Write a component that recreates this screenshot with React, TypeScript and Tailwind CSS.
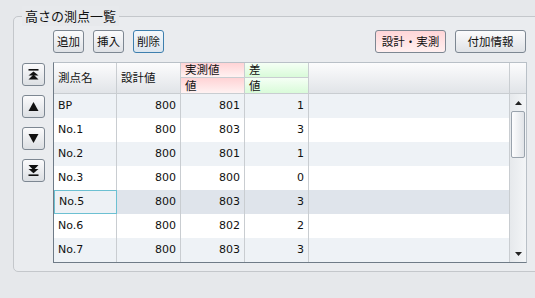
import React from 'react';

const jp = { fontFamily: '"Noto Sans CJK JP", "Noto Sans", sans-serif' };
const num = { fontFamily: '"DejaVu Sans", Verdana, sans-serif' };

type Row = { name: string; design: number; actual: number; diff: number };

const rows: Row[] = [
  { name: 'BP', design: 800, actual: 801, diff: 1 },
  { name: 'No.1', design: 800, actual: 803, diff: 3 },
  { name: 'No.2', design: 800, actual: 801, diff: 1 },
  { name: 'No.3', design: 800, actual: 800, diff: 0 },
  { name: 'No.5', design: 800, actual: 803, diff: 3 },
  { name: 'No.6', design: 800, actual: 802, diff: 2 },
  { name: 'No.7', design: 800, actual: 803, diff: 3 },
];
const selected = 4;

function ToolButton({ label, width, tone = 'plain' }: { label: string; width: string; tone?: 'plain' | 'focus' | 'pink' }) {
  const toneCls =
    tone === 'pink'
      ? 'bg-gradient-to-b from-[#ffd6d8] to-[#fff0f0] border-[#7d8792]'
      : tone === 'focus'
        ? 'bg-gradient-to-b from-[#f4f8fb] to-[#dce5ee] border-[#3d7fae]'
        : 'bg-gradient-to-b from-[#fbfbfc] to-[#dfe2e6] border-[#7d8792]';
  return (
    <button
      style={jp}
      className={`${width} h-[23px] border rounded-[3px] text-[11.5px] leading-none text-[#111] flex items-center justify-center ${toneCls}`}
    >
      {label}
    </button>
  );
}

function MoveIcon({ kind }: { kind: 'top' | 'up' | 'down' | 'bottom' }) {
  return (
    <svg width="11" height="11" viewBox="0 0 11 11" fill="#111">
      {kind === 'top' && (
        <>
          <rect x="0.5" y="0" width="10" height="1.6" />
          <polygon points="5.5,2.4 10.5,6.6 0.5,6.6" />
          <polygon points="5.5,5.4 10.5,10.6 0.5,10.6" />
        </>
      )}
      {kind === 'up' && <polygon points="5.5,1 10.5,10 0.5,10" />}
      {kind === 'down' && <polygon points="0.5,1 10.5,1 5.5,10" />}
      {kind === 'bottom' && (
        <>
          <polygon points="0.5,0 10.5,0 5.5,5.2" />
          <polygon points="0.5,4 10.5,4 5.5,8.2" />
          <rect x="0.5" y="9.4" width="10" height="1.6" />
        </>
      )}
    </svg>
  );
}

function MoveButton({ kind }: { kind: 'top' | 'up' | 'down' | 'bottom' }) {
  return (
    <button className="w-[23px] h-[23px] border border-[#7d8792] rounded-[3px] bg-gradient-to-b from-[#fbfbfc] to-[#dcdfe3] flex items-center justify-center">
      <MoveIcon kind={kind} />
    </button>
  );
}

export default function App() {
  return (
    <div className="w-[535px] h-[298px] bg-[#e6e8eb] overflow-hidden pt-[16px] pl-[13px]">
      <div className="relative w-[540px] h-[256px] border border-[#c4c7cb] rounded-[5px] bg-[#eaecef]">
        <span style={jp} className="absolute -top-[11px] left-[8px] px-[3px] bg-[#e7e9ec] text-[13px] leading-[20px] text-[#111]">
          高さの測点一覧
        </span>

        <div className="flex">
          <div className="ml-[8px] pt-[46px] flex flex-col gap-[9px]">
            <MoveButton kind="top" />
            <MoveButton kind="up" />
            <MoveButton kind="down" />
            <MoveButton kind="bottom" />
          </div>

          <div className="ml-[8px] pt-[13px] w-[474px]">
            <div className="flex justify-between h-[23px]">
              <div className="flex gap-[9px]">
                <ToolButton label="追加" width="w-[31px]" />
                <ToolButton label="挿入" width="w-[31px]" />
                <ToolButton label="削除" width="w-[31px]" tone="focus" />
              </div>
              <div className="flex gap-[9px] pr-[1px]">
                <ToolButton label="設計・実測" width="w-[71px]" tone="pink" />
                <ToolButton label="付加情報" width="w-[71px]" />
              </div>
            </div>

            <div className="mt-[9px] h-[201px] border border-t-[#b9c0c7] border-r-[#b9c0c7] border-l-[#6f7b87] border-b-[#6f7b87] bg-white">
              {/* header */}
              <div style={jp} className="flex h-[31px] border-b border-[#c9cdd1] text-[11.5px] text-[#111] leading-none">
                <div className="w-[63px] border-r border-[#c9cdd1] bg-gradient-to-b from-[#fcfcfd] to-[#e1e4e8] flex items-center pl-[4px]">測点名</div>
                <div className="w-[64px] border-r border-[#c9cdd1] bg-gradient-to-b from-[#fcfcfd] to-[#e1e4e8] flex items-center pl-[4px]">設計値</div>
                <div className="w-[64px] border-r border-[#c9cdd1] flex flex-col">
                  <div className="h-[15px] border-b border-[#c9cdd1] bg-gradient-to-b from-[#ffd3d5] to-[#fff2f2] flex items-center pl-[4px]">実測値</div>
                  <div className="flex-1 bg-gradient-to-b from-[#ffd3d5] to-[#fff2f2] flex items-center pl-[4px]">値</div>
                </div>
                <div className="w-[64px] border-r border-[#c9cdd1] flex flex-col">
                  <div className="h-[15px] border-b border-[#c9cdd1] bg-gradient-to-b from-[#f5fff5] to-[#d9fbd9] flex items-center pl-[4px]">差</div>
                  <div className="flex-1 bg-gradient-to-b from-[#f5fff5] to-[#d9fbd9] flex items-center pl-[4px]">値</div>
                </div>
                <div className="flex-1 border-r border-[#c9cdd1] bg-gradient-to-b from-[#fcfcfd] to-[#e1e4e8]" />
                <div className="w-[16px] bg-gradient-to-b from-[#fcfcfd] to-[#e1e4e8]" />
              </div>

              {/* body */}
              <div className="flex h-[168px]">
                <div style={num} className="flex-1 text-[11px] text-[#111]">
                  {rows.map((r, i) => {
                    const bg = i === selected ? 'bg-[#dfe4eb]' : i % 2 === 0 ? 'bg-[#eef2f6]' : 'bg-white';
                    return (
                      <div key={r.name} className={`flex h-[24px] ${bg}`}>
                        <div className={`w-[63px] border-r flex items-center pl-[4px] ${i === selected ? 'border border-[#6cc0d2] bg-[#edf1f5]' : 'border-[#c9cdd1]'}`}>{r.name}</div>
                        <div className="w-[64px] border-r border-[#c9cdd1] flex items-center justify-end pr-[4px]">{r.design}</div>
                        <div className="w-[64px] border-r border-[#c9cdd1] flex items-center justify-end pr-[4px]">{r.actual}</div>
                        <div className="w-[64px] border-r border-[#c9cdd1] flex items-center justify-end pr-[4px]">{r.diff}</div>
                        <div className="flex-1" />
                      </div>
                    );
                  })}
                </div>

                {/* scrollbar */}
                <div className="w-[17px] border-l border-[#c9cdd1] bg-gradient-to-r from-[#e6e9ec] to-[#f3f5f7] flex flex-col">
                  <div className="h-[17px] flex items-center justify-center">
                    <svg width="7" height="4" viewBox="0 0 7 4"><polygon points="3.5,0 7,4 0,4" fill="#222" /></svg>
                  </div>
                  <div className="mx-[1px] h-[47px] border border-[#9aa3ad] rounded-[2px] bg-gradient-to-r from-[#fdfdfe] to-[#e1e4e8]" />
                  <div className="flex-1" />
                  <div className="h-[17px] flex items-center justify-center">
                    <svg width="7" height="4" viewBox="0 0 7 4"><polygon points="0,0 7,0 3.5,4" fill="#222" /></svg>
                  </div>
                </div>
              </div>
            </div>
          </div>
        </div>
      </div>
    </div>
  );
}
